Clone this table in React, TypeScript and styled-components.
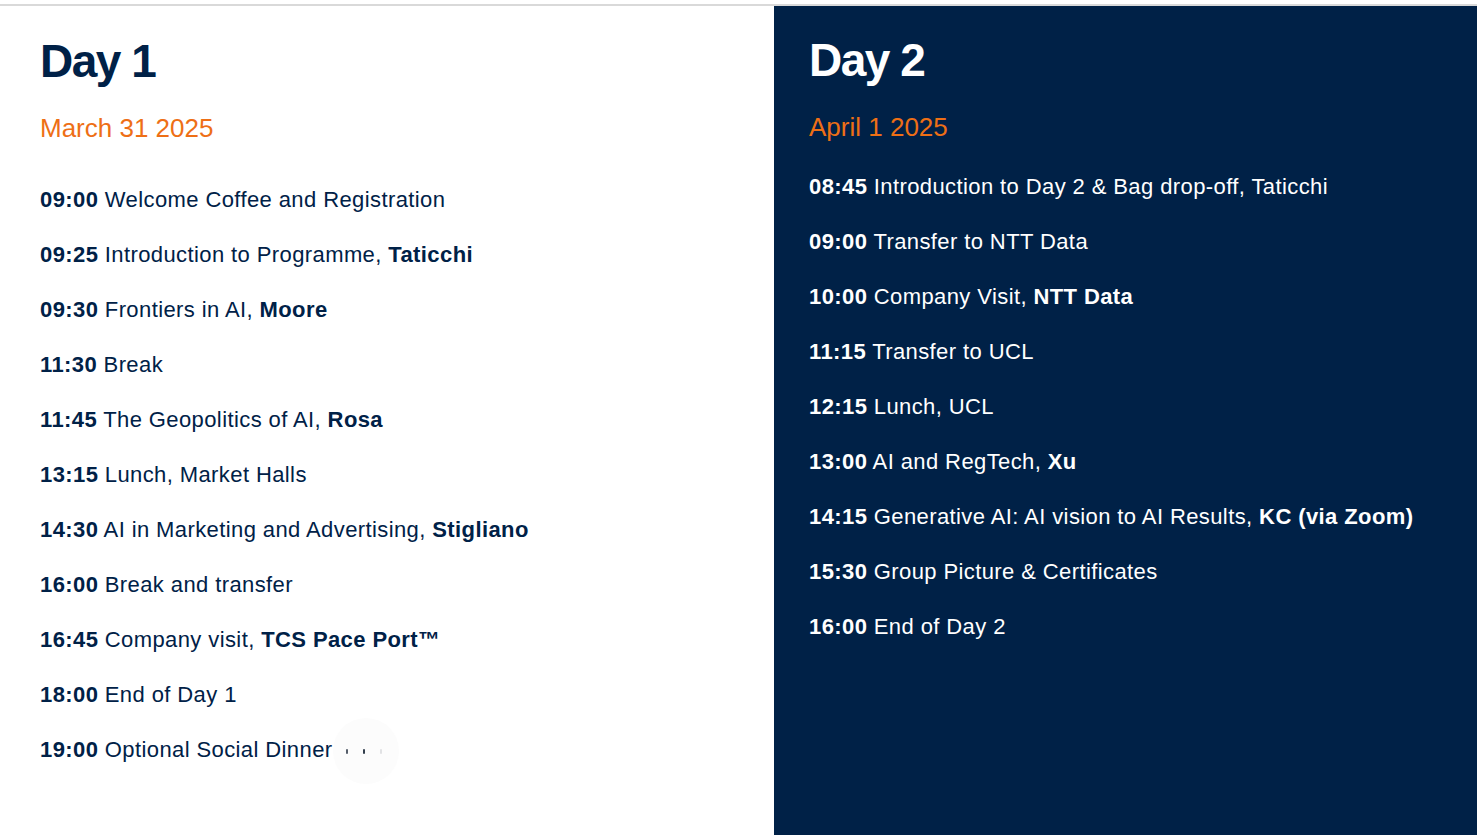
import styled, { createGlobalStyle } from "styled-components";

type Session = { time: string; title: string; speaker?: string };

const dayOne: Session[] = [
    { time: "09:00", title: "Welcome Coffee and Registration" },
    { time: "09:25", title: "Introduction to Programme, ", speaker: "Taticchi" },
    { time: "09:30", title: "Frontiers in AI, ", speaker: "Moore" },
    { time: "11:30", title: "Break" },
    { time: "11:45", title: "The Geopolitics of AI, ", speaker: "Rosa" },
    { time: "13:15", title: "Lunch, Market Halls" },
    { time: "14:30", title: "AI in Marketing and Advertising, ", speaker: "Stigliano" },
    { time: "16:00", title: "Break and transfer" },
    { time: "16:45", title: "Company visit, ", speaker: "TCS Pace Port™" },
    { time: "18:00", title: "End of Day 1" },
    { time: "19:00", title: "Optional Social Dinner" },
];

const dayTwo: Session[] = [
    { time: "08:45", title: "Introduction to Day 2 & Bag drop-off, Taticchi" },
    { time: "09:00", title: "Transfer to NTT Data" },
    { time: "10:00", title: "Company Visit, ", speaker: "NTT Data" },
    { time: "11:15", title: "Transfer to UCL" },
    { time: "12:15", title: "Lunch, UCL" },
    { time: "13:00", title: "AI and RegTech, ", speaker: "Xu" },
    { time: "14:15", title: "Generative AI: AI vision to AI Results, ", speaker: "KC (via Zoom)" },
    { time: "15:30", title: "Group Picture & Certificates" },
    { time: "16:00", title: "End of Day 2" },
];

const App = () => {
    return (
        <>
            <GlobalStyle />
            <Page>
                <Panel $dark={false}>
                    <DayTitle $dark={false}>Day 1</DayTitle>
                    <DayDate>March 31 2025</DayDate>
                    <Schedule $offset={45}>
                        {dayOne.map((s, i) => (
                            <Item key={s.time + i} $dark={false}>
                                <Time>{s.time}</Time>{" " + s.title}
                                {s.speaker && <Speaker>{s.speaker}</Speaker>}
                                {i === dayOne.length - 1 && (
                                    <Blur>
                                        <Dot $o={0.75} />
                                        <Dot $o={0.9} />
                                        <Dot $o={0.12} />
                                    </Blur>
                                )}
                            </Item>
                        ))}
                    </Schedule>
                </Panel>
                <Panel $dark>
                    <DayTitle $dark>Day 2</DayTitle>
                    <DayDate>April 1 2025</DayDate>
                    <Schedule $offset={33}>
                        {dayTwo.map((s, i) => (
                            <Item key={s.time + i} $dark>
                                <Time>{s.time}</Time>{" " + s.title}
                                {s.speaker && <Speaker>{s.speaker}</Speaker>}
                            </Item>
                        ))}
                    </Schedule>
                </Panel>
            </Page>
        </>
    );
};

const GlobalStyle = createGlobalStyle`
    body {
        margin: 0;
        padding-top: 4px;
        background: #ffffff;
        font-family: "Liberation Sans", Arial, sans-serif;
    }
`;

const Page = styled.div`
    display: grid;
    grid-template-columns: 774px 1fr;
    min-height: 829px;
    border-top: 2px solid #d9d9d9;
`;

const Panel = styled.section<{ $dark: boolean }>`
    display: flex;
    flex-direction: column;
    padding: ${(p) => (p.$dark ? "26px 0 0 35px" : "27px 0 0 40px")};
    background: ${(p) => (p.$dark ? "#002147" : "#ffffff")};
`;

const DayTitle = styled.h2<{ $dark: boolean }>`
    margin: 0;
    font-size: 46px;
    line-height: 56px;
    letter-spacing: -1.5px;
    font-weight: 700;
    color: ${(p) => (p.$dark ? "#ffffff" : "#002147")};
`;

const DayDate = styled.div`
    margin-top: 24px;
    font-size: 26px;
    line-height: 30px;
    color: #ee6f16;
`;

const Schedule = styled.ul<{ $offset: number }>`
    list-style: none;
    margin: ${(p) => p.$offset}px 0 0;
    padding: 0;
    display: flex;
    flex-direction: column;
    gap: 31px;
`;

const Item = styled.li<{ $dark: boolean }>`
    display: block;
    white-space: nowrap;
    font-size: 22px;
    line-height: 24px;
    letter-spacing: 0.4px;
    color: ${(p) => (p.$dark ? "#ffffff" : "#002147")};
`;

const Time = styled.b`
    font-weight: 700;
`;

const Speaker = styled.b`
    font-weight: 700;
`;

const Blur = styled.span`
    display: inline-flex;
    vertical-align: middle;
    align-items: center;
    justify-content: flex-start;
    gap: 15px;
    box-sizing: border-box;
    width: 66px;
    height: 66px;
    margin: -21px 0 -21px 0;
    padding: 0 0 0 13px;
    border-radius: 50%;
    background: #fcfcfc;
`;

const Dot = styled.i<{ $o: number }>`
    width: 2px;
    height: 5px;
    border-radius: 1px;
    background: #1d2a3a;
    opacity: ${(p) => p.$o};
`;

export default App;
